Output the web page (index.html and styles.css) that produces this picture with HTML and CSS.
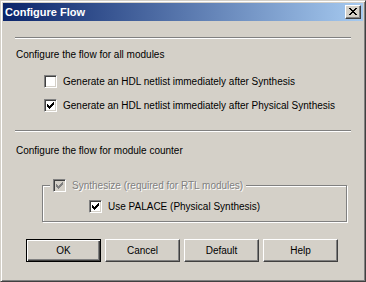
FILE: index.html
```html
<!DOCTYPE html>
<html lang="en">
<head>
    <meta charset="UTF-8">
    <title>Configure Flow</title>
    <link rel="stylesheet" href="styles.css">
</head>
<body>
    <div class="window">
        <div class="titlebar">
            <span class="title">Configure Flow</span>
            <div class="close">
                <svg width="8" height="7" viewBox="0 0 8 7" shape-rendering="crispEdges">
                    <rect x="0" y="0" width="2" height="1"/><rect x="6" y="0" width="2" height="1"/>
                    <rect x="1" y="1" width="2" height="1"/><rect x="5" y="1" width="2" height="1"/>
                    <rect x="2" y="2" width="4" height="1"/>
                    <rect x="3" y="3" width="2" height="1"/>
                    <rect x="2" y="4" width="4" height="1"/>
                    <rect x="1" y="5" width="2" height="1"/><rect x="5" y="5" width="2" height="1"/>
                    <rect x="0" y="6" width="2" height="1"/><rect x="6" y="6" width="2" height="1"/>
                </svg>
            </div>
        </div>

        <div class="content">
            <div class="sep"></div>
            <div class="heading first">Configure the flow for all modules</div>

            <div class="check row1">
                <span class="box"></span>
                <span>Generate an HDL netlist immediately after Synthesis</span>
            </div>
            <div class="check row2">
                <span class="box checked">
                    <svg width="7" height="7" viewBox="0 0 7 7" shape-rendering="crispEdges">
                        <rect x="0" y="2" width="1" height="3"/><rect x="1" y="3" width="1" height="3"/>
                        <rect x="2" y="4" width="1" height="3"/><rect x="3" y="3" width="1" height="3"/>
                        <rect x="4" y="2" width="1" height="3"/><rect x="5" y="1" width="1" height="3"/>
                        <rect x="6" y="0" width="1" height="3"/>
                    </svg>
                </span>
                <span>Generate an HDL netlist immediately after Physical Synthesis</span>
            </div>

            <div class="sep second"></div>
            <div class="heading">Configure the flow for module counter</div>

            <div class="group">
                <div class="check legend disabled">
                    <span class="box checked">
                        <svg width="7" height="7" viewBox="0 0 7 7" shape-rendering="crispEdges">
                            <rect x="0" y="2" width="1" height="3"/><rect x="1" y="3" width="1" height="3"/>
                            <rect x="2" y="4" width="1" height="3"/><rect x="3" y="3" width="1" height="3"/>
                            <rect x="4" y="2" width="1" height="3"/><rect x="5" y="1" width="1" height="3"/>
                            <rect x="6" y="0" width="1" height="3"/>
                        </svg>
                    </span>
                    <span>Synthesize (required for RTL modules)</span>
                </div>
                <div class="check">
                    <span class="box checked">
                        <svg width="7" height="7" viewBox="0 0 7 7" shape-rendering="crispEdges">
                            <rect x="0" y="2" width="1" height="3"/><rect x="1" y="3" width="1" height="3"/>
                            <rect x="2" y="4" width="1" height="3"/><rect x="3" y="3" width="1" height="3"/>
                            <rect x="4" y="2" width="1" height="3"/><rect x="5" y="1" width="1" height="3"/>
                            <rect x="6" y="0" width="1" height="3"/>
                        </svg>
                    </span>
                    <span>Use PALACE (Physical Synthesis)</span>
                </div>
            </div>

            <div class="buttons">
                <div class="btn default">OK</div>
                <div class="btn">Cancel</div>
                <div class="btn">Default</div>
                <div class="btn">Help</div>
            </div>
        </div>
    </div>
</body>
</html>
```

FILE: styles.css
```css
body {
    margin: 0;
    padding: 0;
    background-color: #d4d0c8;
    font-family: "Liberation Sans", Arial, sans-serif;
    font-size: 11px;
    color: #000;
}

.window {
    box-sizing: border-box;
    width: 366px;
    height: 282px;
    padding: 2px;
    border: 1px solid;
    border-color: #d4d0c8 #404040 #404040 #d4d0c8;
    box-shadow: inset 1px 1px #fff, inset -1px -1px #808080;
    background-color: #d4d0c8;
}

/* title bar */
.titlebar {
    display: flex;
    align-items: flex-start;
    justify-content: space-between;
    height: 18px;
    padding: 0 2px 0 2px;
    background: linear-gradient(to right, #0a246a, #a6caf0);
}

.title {
    line-height: 18px;
    font-weight: bold;
    color: #fff;
}

.close {
    box-sizing: border-box;
    display: flex;
    align-items: flex-start;
    width: 16px;
    height: 14px;
    margin-top: 2px;
    padding: 2px 0 0 3px;
    background-color: #d4d0c8;
    border: 1px solid;
    border-color: #fff #404040 #404040 #fff;
    box-shadow: inset -1px -1px #808080;
}

/* dialog body */
.content {
    padding: 16px 12px 0 12px;
    font-size: 10px;
    white-space: nowrap;
}

.sep {
    width: 336px;
    height: 1px;
    border-bottom: 1px solid #fff;
    background-color: #808080;
}

.sep.second {
    margin-top: 18px;
}

.heading {
    line-height: 13px;
    margin-top: 12px;
    padding-left: 1px;
}

.heading.first {
    margin-top: 9px;
}

.check {
    display: flex;
    align-items: center;
    gap: 6px;
    height: 13px;
    line-height: 13px;
}

.row1 {
    margin: 14px 0 0 29px;
}

.row2 {
    margin: 11px 0 0 29px;
}

.box {
    box-sizing: border-box;
    display: flex;
    flex-shrink: 0;
    width: 13px;
    height: 13px;
    padding: 2px 0 0 2px;
    background-color: #fff;
    border: 1px solid;
    border-color: #808080 #fff #fff #808080;
    box-shadow: inset 1px 1px #404040, inset -1px -1px #d4d0c8;
}

.disabled .box {
    background-color: #d4d0c8;
}

.disabled svg {
    fill: #808080;
}

.disabled span:last-child {
    color: #808080;
    text-shadow: 1px 1px #fff;
}

/* group box */
.group {
    position: relative;
    box-sizing: border-box;
    width: 305px;
    height: 37px;
    margin: 28px 0 0 27px;
    padding: 14px 0 0 46px;
    border: 1px solid #808080;
    box-shadow: inset 1px 1px #fff, 1px 1px #fff;
}

.group .legend {
    position: absolute;
    top: -7px;
    left: 7px;
    padding: 0 3px;
    background-color: #d4d0c8;
}

/* buttons */
.buttons {
    display: flex;
    gap: 4px;
    margin: 17px 0 0 11px;
}

.btn {
    box-sizing: border-box;
    width: 75px;
    height: 23px;
    line-height: 21px;
    text-align: center;
    border: 1px solid;
    border-color: #fff #404040 #404040 #fff;
    box-shadow: inset -1px -1px #808080;
}

.btn.default {
    border-color: #000;
    box-shadow: inset 1px 1px #fff, inset -1px -1px #404040, inset -2px -2px #808080;
}
```
